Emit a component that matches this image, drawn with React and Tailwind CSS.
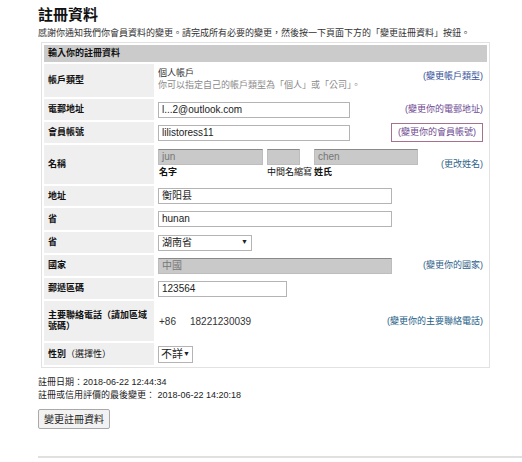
import React from 'react';

const font = { fontFamily: '"Liberation Sans", "Noto Sans CJK TC", sans-serif' };

function Input({ value, w, gray }) {
  return (
    <div
      className={`h-[16px] border flex items-center px-[3px] text-[10px] leading-none ${
        gray
          ? 'bg-[#c9c9c9] border-[#bdbdbd] border-t-[#8a8a8a] text-[#777]'
          : 'bg-white border-[#b4b4b4] text-[#222]'
      } ${w}`}
    >
      {value}
    </div>
  );
}

function Link({ children, boxed, color = 'text-[#34509a]' }) {
  return (
    <span
      className={`inline-block text-[9px] leading-[11px] whitespace-nowrap ${color} ${
        boxed ? 'border border-[#a7708f] px-[6px] py-[3px]' : ''
      }`}
    >
      ({children})
    </span>
  );
}

function Row({ label, h, children, link, top }) {
  return (
    <div className={`flex ${h}`}>
      <div className="w-[110px] shrink-0 bg-[#efefef] pl-[4px] pr-[2px] flex items-center text-[9px] font-bold text-[#111] leading-[11px]">
        {label}
      </div>
      <div className={`flex-1 flex ${top ? 'items-start pt-[3px]' : 'items-center'} pl-[4px]`}>
        <div className="flex-1">{children}</div>
        {link && (
          <div className={`pr-[4px] text-[9px] leading-none flex ${top ? 'pt-[4px]' : ''}`}>{link}</div>
        )}
      </div>
    </div>
  );
}

export default function App() {
  return (
    <div className="w-[522px] h-[462px] bg-white text-[#222] pl-[38px] pt-[6px] overflow-hidden" style={font}>
      <h1 className="text-[15px] font-bold leading-[18px] text-[#111]">註冊資料</h1>
      <p className="text-[9px] mt-[3px] leading-[12px] text-[#333] whitespace-nowrap">
        感謝你通知我們你會員資料的變更。請完成所有必要的變更，然後按一下頁面下方的「變更註冊資料」按鈕。
      </p>

      <div className="ml-[3px] mt-[3px] w-[449px] border border-[#e2e2e2] p-[2px] flex flex-col gap-[2px]">
        <div className="h-[17px] bg-[#cbcbcb] flex items-center pl-[4px] text-[9px] font-bold text-[#111]">
          輸入你的註冊資料
        </div>

        <Row label="帳戶類型" h="h-[33px]" top link={<Link>變更帳戶類型</Link>}>
          <div className="text-[9px] leading-[12px] text-[#333]">個人帳戶</div>
          <div className="text-[9px] leading-[12px] text-[#8a8a8a] whitespace-nowrap">
            你可以指定自己的帳戶類型為「個人」或「公司」。
          </div>
        </Row>

        <Row label="電郵地址" h="h-[21px]" link={<Link color="text-[#6e4a93]">變更你的電郵地址</Link>}>
          <Input value="l...2@outlook.com" w="w-[192px]" />
        </Row>

        <Row
          label="會員帳號"
          h="h-[21px]"
          link={
            <Link boxed color="text-[#6e4a93]">
              變更你的會員帳號
            </Link>
          }
        >
          <Input value="lilistoress11" w="w-[192px]" />
        </Row>

        <Row label="名稱" h="h-[39px]" link={<Link color="text-[#2f6488]">更改姓名</Link>}>
          <div className="flex gap-[4px]">
            <div className="flex flex-col">
              <Input value="jun" w="w-[105px]" gray />
              <span className="text-[9px] font-bold text-[#111] mt-[1px] pl-[1px]">名字</span>
            </div>
            <div className="flex flex-col w-[33px]">
              <Input value="" w="w-[33px]" gray />
              <span className="text-[9px] text-[#111] mt-[1px] whitespace-nowrap">中間名縮寫</span>
            </div>
            <div className="flex flex-col ml-[10px]">
              <Input value="chen" w="w-[104px]" gray />
              <span className="text-[9px] font-bold text-[#111] mt-[1px]">姓氏</span>
            </div>
          </div>
        </Row>

        <Row label="地址" h="h-[20px]">
          <Input value="衡阳县" w="w-[234px]" />
        </Row>

        <Row label="省" h="h-[22px]">
          <Input value="hunan" w="w-[234px]" />
        </Row>

        <Row label="省" h="h-[21px]">
          <div className="w-[94px] h-[16px] border border-[#b4b4b4] bg-white flex items-center justify-between px-[3px] text-[10px]">
            <span>湖南省</span>
            <span className="text-[7px] text-[#222]">▼</span>
          </div>
        </Row>

        <Row label="國家" h="h-[21px]" link={<Link color="text-[#2f5f8a]">變更你的國家</Link>}>
          <Input value="中國" w="w-[234px]" gray />
        </Row>

        <Row label="郵遞區碼" h="h-[21px]">
          <Input value="123564" w="w-[129px]" />
        </Row>

        <Row
          label="主要聯絡電話（請加區域號碼）"
          h="h-[40px]"
          link={<Link color="text-[#235e87]">變更你的主要聯絡電話</Link>}
        >
          <div className="flex gap-[14px] text-[10px] text-[#333] pl-[1px]">
            <span>+86</span>
            <span>18221230039</span>
          </div>
        </Row>

        <Row
          label={
            <span>
              性別<span className="font-normal">（選擇性）</span>
            </span>
          }
          h="h-[22px]"
        >
          <div className="w-[35px] h-[17px] border border-[#b4b4b4] bg-white flex items-center justify-between px-[2px] text-[11px]">
            <span>不詳</span>
            <span className="text-[7px]">▼</span>
          </div>
        </Row>
      </div>

      <div className="mt-[8px] text-[9px] leading-[13px] text-[#222]">
        <div>註冊日期：2018-06-22 12:44:34</div>
        <div>註冊或信用評價的最後變更：&nbsp;2018-06-22 14:20:18</div>
      </div>

      <button className="mt-[7px] h-[20px] w-[72px] border border-[#a9a9a9] bg-[#f2f2f2] text-[10px] text-[#222] rounded-[2px]">
        變更註冊資料
      </button>

      <div className="mt-[26px] h-[2px] bg-[#e0e0e0]" />
    </div>
  );
}
